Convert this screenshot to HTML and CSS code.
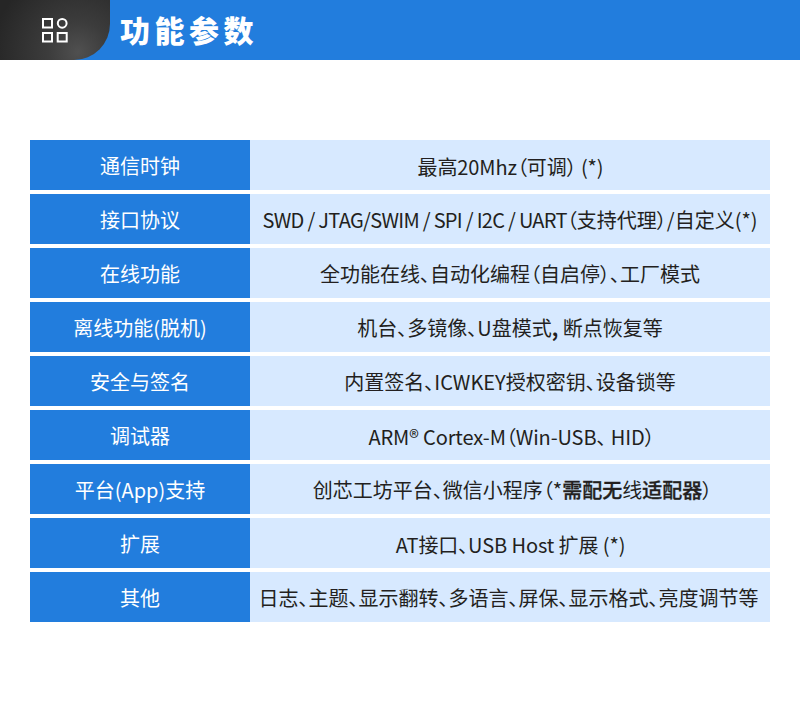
FILE: index.html
```html
<!DOCTYPE html>
<html lang="zh-CN">
<head>
<meta charset="utf-8">
<title>功能参数</title>
<link rel="stylesheet" href="styles.css">
</head>
<body>
<header class="head">
  <div class="badge">
    <svg class="badge-icon" width="26" height="26" viewBox="0 0 26 26" fill="none" stroke="#fff" stroke-width="2">
      <rect x="1" y="2" width="9" height="8.5"/>
      <circle cx="20.2" cy="6.3" r="4.4"/>
      <rect x="1" y="16" width="9" height="8.5"/>
      <rect x="15.7" y="16" width="9" height="8.5"/>
    </svg>
  </div>
  <h1 class="title">功能参数</h1>
</header>
<main class="table">
  <div class="label">通信时钟</div><div class="value low nudge narrow">最高20Mhz（可调） (*)</div>
  <div class="label">接口协议</div><div class="value"><span class="latin">SWD / JTAG/SWIM / SPI / I2C / UART</span>（支持代理）/自定义(*)</div>
  <div class="label">在线功能</div><div class="value">全功能在线、自动化编程（自启停）、工厂模式</div>
  <div class="label">离线功能(脱机)</div><div class="value">机台、多镜像、U盘模式<b>,</b> 断点恢复等</div>
  <div class="label">安全与签名</div><div class="value">内置签名、ICWKEY授权密钥、设备锁等</div>
  <div class="label">调试器</div><div class="value low narrow shift-small">ARM® Cortex-M（Win-USB、 HID）</div>
  <div class="label">平台(App)支持</div><div class="value shift">创芯工坊平台、微信小程序（*<span class="strong">需配无</span>线<span class="strong">适配器</span>）</div>
  <div class="label">扩展</div><div class="value low narrow nudge">AT接口、USB Host 扩展 (*)</div>
  <div class="label">其他</div><div class="value back">日志、主题、显示翻转、多语言、屏保、显示格式、亮度调节等</div>
</main>
</body>
</html>
```
FILE: styles.css
```css
* { box-sizing: border-box; }
html, body { margin: 0; padding: 0; background: #fff; }
body {
  width: 800px;
  height: 702px;
  overflow: hidden;
  font-family: "Noto Sans CJK SC", "Noto Sans", sans-serif;
}
.head {
  height: 60px;
  background: #227ddd;
  display: flex;
  align-items: center;
}
.badge {
  width: 110px;
  height: 60px;
  border-bottom-right-radius: 36px 36px;
  background: radial-gradient(circle at 78px 52px, #505050 0, #3c3c3c 30px, #262626 85px);
  display: flex;
  align-items: center;
  justify-content: center;
}
.title {
  margin: 0 0 2px 10px;
  font-size: 30px;
  font-weight: 900;
  letter-spacing: 4.5px;
  color: #fff;
  line-height: 58px;
}
.table {
  margin: 80px 30px 0;
  display: grid;
  grid-template-columns: 220px 520px;
  grid-auto-rows: 50px;
  row-gap: 4px;
}
.label, .value {
  display: flex;
  align-items: center;
  justify-content: center;
  font-size: 20px;
  white-space: pre;
  font-feature-settings: "palt";
}
.label { background: #227ddd; color: #fff; }
.value { background: #d7e9ff; color: #231f20; }
.low { padding-top: 2px; }
.latin { letter-spacing: -0.7px; }
.narrow { letter-spacing: -0.1px; }
.nudge { padding-left: 1px; }
.shift-small { padding-left: 3px; }
.shift { padding-left: 5px; }
.back { padding-right: 3px; }
.strong { font-weight: 500; -webkit-text-stroke: 0.3px #231f20; }
```
